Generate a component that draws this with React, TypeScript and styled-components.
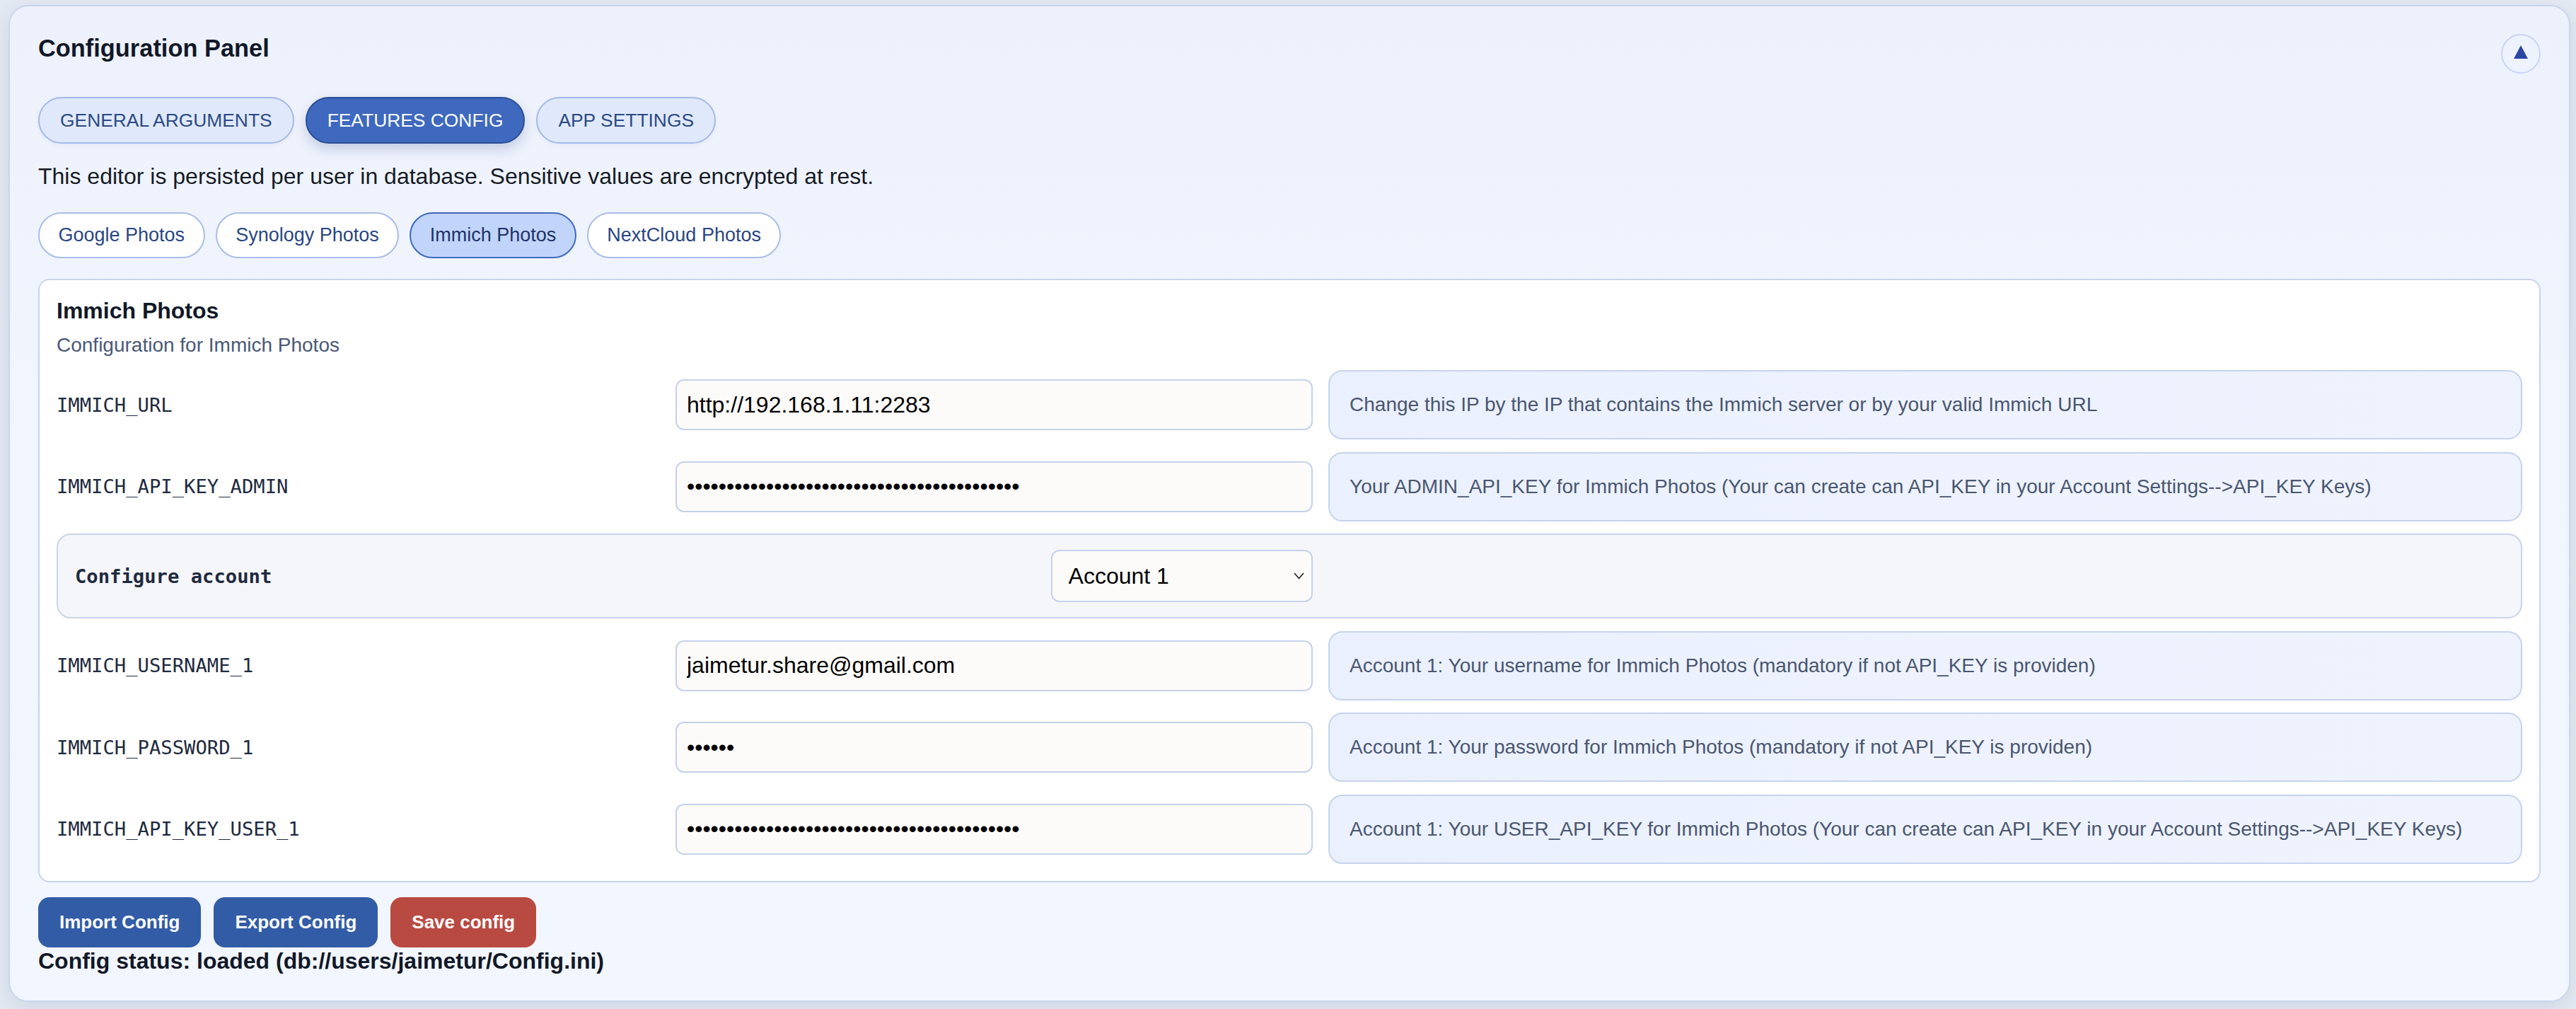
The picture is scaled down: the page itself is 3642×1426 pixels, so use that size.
import React, { useState } from "react"
import styled, { createGlobalStyle } from "styled-components"

const GlobalStyle = createGlobalStyle`
	html, body {
		margin: 0;
		padding: 0;
		background: #e3e9f2;
	}
	body {
		font-family: "Liberation Sans", Arial, Helvetica, sans-serif;
		color: #161b26;
	}
	* {
		box-sizing: border-box;
	}
`

type Field = {
	key: string
	value: string
	secret?: boolean
	help: string
}

const mainFields: Field[] = [
	{
		key: "IMMICH_URL",
		value: "http://192.168.1.11:2283",
		help: "Change this IP by the IP that contains the Immich server or by your valid Immich URL",
	},
	{
		key: "IMMICH_API_KEY_ADMIN",
		value: "x".repeat(42),
		secret: true,
		help: "Your ADMIN_API_KEY for Immich Photos (Your can create can API_KEY in your Account Settings-->API_KEY Keys)",
	},
]

const accountFields: Field[] = [
	{
		key: "IMMICH_USERNAME_1",
		value: "jaimetur.share@gmail.com",
		help: "Account 1: Your username for Immich Photos (mandatory if not API_KEY is providen)",
	},
	{
		key: "IMMICH_PASSWORD_1",
		value: "xxxxxx",
		secret: true,
		help: "Account 1: Your password for Immich Photos (mandatory if not API_KEY is providen)",
	},
	{
		key: "IMMICH_API_KEY_USER_1",
		value: "x".repeat(42),
		secret: true,
		help: "Account 1: Your USER_API_KEY for Immich Photos (Your can create can API_KEY in your Account Settings-->API_KEY Keys)",
	},
]

const Page = styled.div`
	padding: 7px 8px 13px 12px;
`

const Panel = styled.section`
	border: 2px solid #c9d5ec;
	border-radius: 28px;
	background: linear-gradient(180deg, #edf1fb 0%, #f1f5fe 40%, #f2f6ff 100%);
	box-shadow: 0 8px 26px rgba(60, 80, 130, 0.12);
	padding: 39px 40px 37px 40px;
`

const Header = styled.div`
	display: flex;
	align-items: flex-start;
	justify-content: space-between;
	height: 56px;
`

const Title = styled.h2`
	margin: 0;
	font-size: 34.4px;
	line-height: 41px;
	font-weight: 700;
	color: #111827;
`

const CollapseButton = styled.button`
	width: 56px;
	height: 56px;
	border-radius: 50%;
	border: 2px solid #c9d3f6;
	background: #eef2fe;
	display: flex;
	align-items: center;
	justify-content: center;
	padding: 0 0 6px 0;
	cursor: pointer;
`

const TabRow = styled.div<{ $top: number; $gap: number }>`
	display: flex;
	gap: ${(p) => p.$gap}px;
	margin-top: ${(p) => p.$top}px;
`

const MainTab = styled.button<{ $active?: boolean }>`
	height: 66px;
	padding: 0 29px;
	border-radius: 33px;
	border: 2px solid ${(p) => (p.$active ? "#2a4d96" : "#a3b9e8")};
	background: ${(p) => (p.$active ? "#3e69bf" : "#e0e9fb")};
	color: ${(p) => (p.$active ? "#ffffff" : "#2c4985")};
	box-shadow: ${(p) => (p.$active ? "0 8px 18px rgba(40, 70, 140, 0.22)" : "0 2px 6px rgba(40, 70, 140, 0.06)")};
	font-family: "Liberation Sans", Arial, sans-serif;
	font-size: 26.4px;
	text-transform: uppercase;
	cursor: pointer;
`

const SubTab = styled.button<{ $active?: boolean }>`
	height: 65px;
	padding: 0 26.5px;
	border-radius: 33px;
	border: 2px solid ${(p) => (p.$active ? "#3f69bf" : "#a9bde8")};
	background: ${(p) => (p.$active ? "#c1d5fb" : "#ffffff")};
	color: ${(p) => (p.$active ? "#1d3366" : "#2a4682")};
	font-family: "Liberation Sans", Arial, sans-serif;
	font-size: 27px;
	cursor: pointer;
`

const Notice = styled.p`
	margin: 22px 0 0 0;
	font-size: 32px;
	line-height: 48px;
	color: #161b26;
`

const Card = styled.div`
	margin-top: 29px;
	background: #ffffff;
	border: 2px solid #c8d4ea;
	border-radius: 16px;
	padding: 24px;
`

const CardTitle = styled.h3`
	margin: 0;
	font-size: 32px;
	line-height: 38px;
	font-weight: 700;
	color: #111827;
`

const CardSubtitle = styled.div`
	margin-top: 10px;
	font-size: 28px;
	line-height: 39px;
	color: #4a5878;
`

const Rows = styled.div`
	margin-top: 16px;
	display: flex;
	flex-direction: column;
	gap: 17.5px;
`

const Row = styled.div`
	display: grid;
	grid-template-columns: 426fr 450fr 843fr;
	column-gap: 22px;
	align-items: center;
	min-height: 98px;
`

const AccountBox = styled(Row)`
	min-height: 0;
	padding: 21px 24px;
	border: 2px solid #c8d4ea;
	border-radius: 20px;
	background: #f5f6f9;
`

const KeyLabel = styled.div<{ $bold?: boolean }>`
	font-family: "DejaVu Sans Mono", "Liberation Mono", monospace;
	font-size: 27.2px;
	font-weight: ${(p) => (p.$bold ? 700 : 400)};
	color: #1f2a40;
`

const TextInput = styled.input`
	width: 100%;
	height: 72px;
	padding: 0 14px;
	border: 2px solid #c5d2ea;
	border-radius: 12px;
	background: #fcfbf9;
	font-family: "Liberation Sans", Arial, sans-serif;
	font-size: 32px;
	color: #000000;
	outline: none;
`

const HelpBox = styled.div`
	min-height: 98px;
	display: flex;
	align-items: center;
	padding: 0 28px;
	border: 2px solid #c7d3ee;
	border-radius: 20px;
	background: linear-gradient(90deg, #eaf0fd 0%, #edf2fe 50%, #eff3fe 100%);
	font-size: 28px;
	color: #4a5670;
`

const SelectWrap = styled.div`
	position: relative;
	justify-self: end;
	width: 370px;
`

const AccountSelect = styled.select`
	appearance: none;
	width: 100%;
	height: 74px;
	padding: 0 40px 0 23px;
	border: 2px solid #c5d2ea;
	border-radius: 12px;
	background: #fcfbf9;
	font-family: "Liberation Sans", Arial, sans-serif;
	font-size: 32px;
	color: #000000;
`

const Chevron = styled.svg`
	position: absolute;
	right: 12px;
	top: 32px;
	pointer-events: none;
`

const Actions = styled.div`
	display: flex;
	gap: 18px;
	margin-top: 21px;
`

const ActionButton = styled.button<{ $danger?: boolean }>`
	height: 71px;
	padding: 0 30px;
	border: none;
	border-radius: 16px;
	background: ${(p) => (p.$danger ? "#b94a42" : "#325ca6")};
	color: #ffffff;
	font-family: "Liberation Sans", Arial, sans-serif;
	font-size: 26px;
	font-weight: 700;
	cursor: pointer;
`

const Status = styled.div`
	font-size: 32px;
	line-height: 38px;
	font-weight: 700;
	color: #111827;
`

const FieldRow = ({ field }: { field: Field }) => (
	<Row>
		<KeyLabel>{field.key}</KeyLabel>
		<TextInput type={field.secret ? "password" : "text"} defaultValue={field.value} />
		<HelpBox>{field.help}</HelpBox>
	</Row>
)

export default function App() {
	const [mainTab, setMainTab] = useState("FEATURES CONFIG")
	const [subTab, setSubTab] = useState("Immich Photos")

	return (
		<Page>
			<GlobalStyle />
			<Panel>
				<Header>
					<Title>Configuration Panel</Title>
					<CollapseButton aria-label="collapse">
						<svg width="20" height="19" viewBox="0 0 20 19">
							<polygon points="10,0 20,19 0,19" fill="#2b47a5" />
						</svg>
					</CollapseButton>
				</Header>

				<TabRow $top={33} $gap={16}>
					{["General arguments", "Features config", "App settings"].map((t) => (
						<MainTab
							key={t}
							$active={t.toUpperCase() === mainTab}
							onClick={() => setMainTab(t.toUpperCase())}
						>
							{t}
						</MainTab>
					))}
				</TabRow>

				<Notice>This editor is persisted per user in database. Sensitive values are encrypted at rest.</Notice>

				<TabRow $top={27} $gap={15}>
					{["Google Photos", "Synology Photos", "Immich Photos", "NextCloud Photos"].map((t) => (
						<SubTab key={t} $active={t === subTab} onClick={() => setSubTab(t)}>
							{t}
						</SubTab>
					))}
				</TabRow>

				<Card>
					<CardTitle>Immich Photos</CardTitle>
					<CardSubtitle>Configuration for Immich Photos</CardSubtitle>
					<Rows>
						{mainFields.map((f) => (
							<FieldRow field={f} key={f.key} />
						))}
						<AccountBox>
							<KeyLabel $bold>Configure account</KeyLabel>
							<SelectWrap>
								<AccountSelect defaultValue="1">
									<option value="1">Account 1</option>
									<option value="2">Account 2</option>
									<option value="3">Account 3</option>
								</AccountSelect>
								<Chevron width="15" height="10" viewBox="0 0 15 10">
									<polyline points="1,1 7.5,8.5 14,1" fill="none" stroke="#222" strokeWidth="1.6" />
								</Chevron>
							</SelectWrap>
							<div />
						</AccountBox>
						{accountFields.map((f) => (
							<FieldRow field={f} key={f.key} />
						))}
					</Rows>
				</Card>

				<Actions>
					<ActionButton>Import Config</ActionButton>
					<ActionButton>Export Config</ActionButton>
					<ActionButton $danger>Save config</ActionButton>
				</Actions>
				<Status>Config status: loaded (db://users/jaimetur/Config.ini)</Status>
			</Panel>
		</Page>
	)
}
